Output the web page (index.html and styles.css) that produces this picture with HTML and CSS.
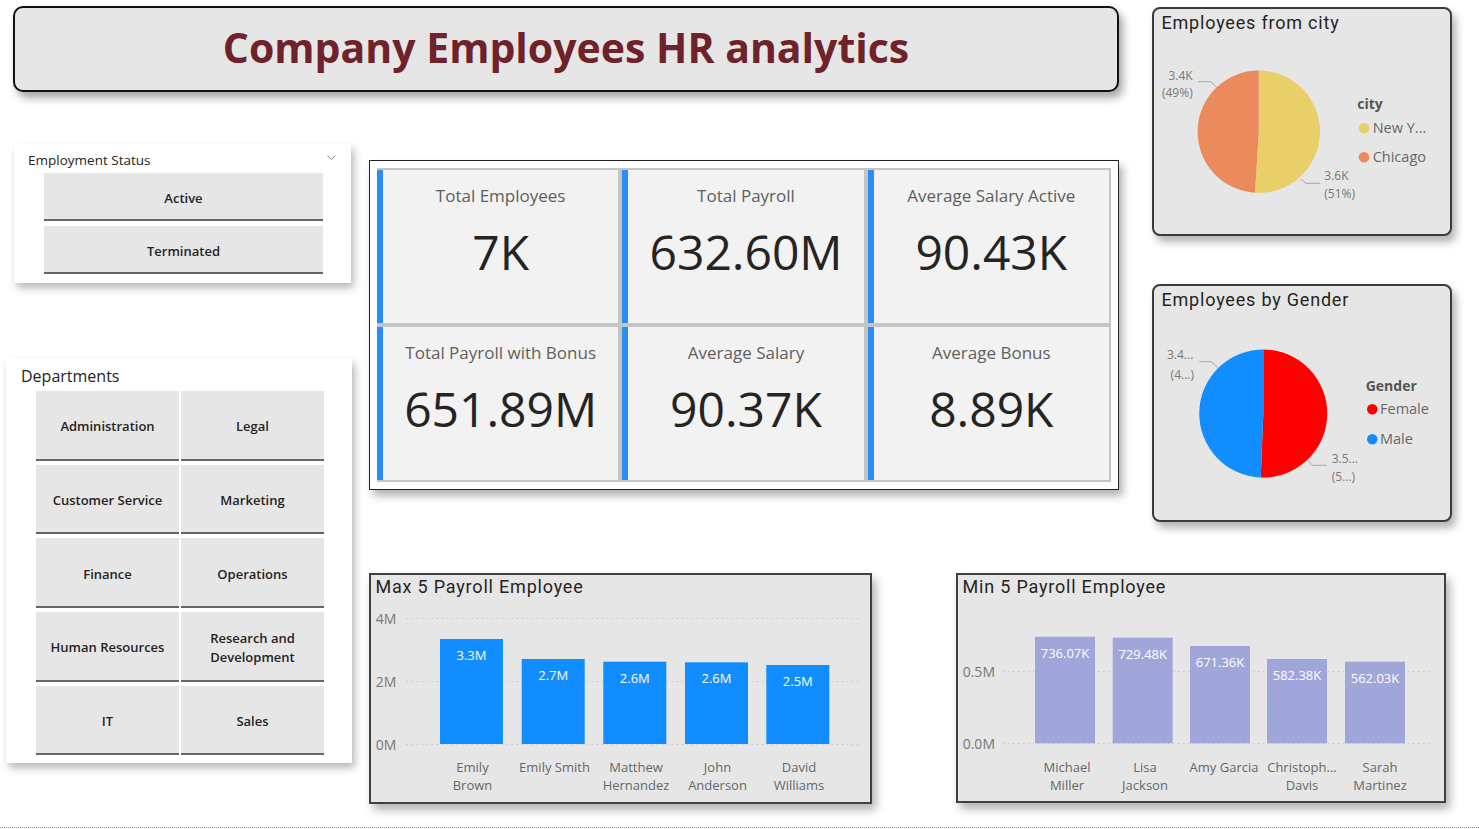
FILE: index.html
```html
<!DOCTYPE html>
<html lang="en">
<head>
<meta charset="utf-8">
<title>Company Employees HR analytics</title>
<link rel="stylesheet" href="styles.css">
</head>
<body>
<main class="page">
  <header class="title-box">
    <h1 class="title">Company Employees HR analytics</h1>
  </header>

  <section class="slicer status">
    <div class="slicer-head">
      <span class="slicer-title">Employment Status</span>
      <svg class="chevron" width="9" height="5" viewBox="0 0 9 5"><polyline points="0.5,0.5 4.5,4.5 8.5,0.5"/></svg>
    </div>
    <div class="status-list">
      <div class="chip">Active</div>
      <div class="chip">Terminated</div>
    </div>
  </section>

  <section class="slicer depts">
    <h2 class="depts-title">Departments</h2>
    <div class="dept-grid">
      <div class="chip">Administration</div>
      <div class="chip">Legal</div>
      <div class="chip">Customer Service</div>
      <div class="chip">Marketing</div>
      <div class="chip">Finance</div>
      <div class="chip">Operations</div>
      <div class="chip">Human Resources</div>
      <div class="chip">Research and<br>Development</div>
      <div class="chip">IT</div>
      <div class="chip">Sales</div>
    </div>
  </section>

  <section class="kpi-panel">
    <div class="kpi-grid">
      <div class="kpi"><div class="kpi-label">Total Employees</div><div class="kpi-value">7K</div></div>
      <div class="kpi"><div class="kpi-label">Total Payroll</div><div class="kpi-value">632.60M</div></div>
      <div class="kpi"><div class="kpi-label">Average Salary Active</div><div class="kpi-value">90.43K</div></div>
      <div class="kpi"><div class="kpi-label">Total Payroll with Bonus</div><div class="kpi-value">651.89M</div></div>
      <div class="kpi"><div class="kpi-label">Average Salary</div><div class="kpi-value">90.37K</div></div>
      <div class="kpi"><div class="kpi-label">Average Bonus</div><div class="kpi-value">8.89K</div></div>
    </div>
  </section>

  <aside class="right-col">
    <section class="pie-card city">
      <h2 class="chart-title">Employees from city</h2>
      <svg class="chart" width="296" height="195" viewBox="2 32 296 195">
        <path class="slice-yellow" d="M106.8 124.7 L106.8 63.5 A61.2 61.2 0 1 1 102.96 185.78 Z"/>
        <path class="slice-orange" d="M106.8 124.7 L102.96 185.78 A61.2 61.2 0 0 1 106.8 63.5 Z"/>
        <polyline class="leader" points="46.3,74.7 58.7,74.7 64.7,80.3"/>
        <polyline class="leader" points="149,172 153.7,176.3 168,176.3"/>
        <text class="pie-lab end" x="40.7" y="73">3.4K</text>
        <text class="pie-lab end" x="40.7" y="90">(49%)</text>
        <text class="pie-lab" x="172.3" y="173">3.6K</text>
        <text class="pie-lab" x="172.3" y="190.6">(51%)</text>
        <text class="leg-title" x="205.3" y="102.3">city</text>
        <circle class="slice-yellow" cx="212" cy="121.3" r="5.3"/>
        <text class="leg-item" x="220.7" y="126.4">New Y...</text>
        <circle class="slice-orange" cx="212" cy="150.3" r="5.3"/>
        <text class="leg-item" x="220.7" y="155.4">Chicago</text>
      </svg>
    </section>

    <section class="pie-card gender">
      <h2 class="chart-title">Employees by Gender</h2>
      <svg class="chart" width="296" height="204" viewBox="2 32 296 204">
        <path class="slice-red" d="M111.3 129.5 L111.3 65.5 A64 64 0 1 1 108.73 193.45 Z"/>
        <path class="slice-blue" d="M111.3 129.5 L108.73 193.45 A64 64 0 0 1 111.3 65.5 Z"/>
        <polyline class="leader" points="47.3,77.7 59,77.7 65.7,83.3"/>
        <polyline class="leader" points="156.3,177 160.7,181.3 174.7,181.3"/>
        <text class="pie-lab end" x="41.3" y="75.3">3.4...</text>
        <text class="pie-lab end" x="42" y="94.6">(4...)</text>
        <text class="pie-lab" x="179.7" y="179.3">3.5...</text>
        <text class="pie-lab" x="179.7" y="197">(5...)</text>
        <text class="leg-title" x="213.7" y="107">Gender</text>
        <circle class="slice-red" cx="220.3" cy="125.3" r="5.3"/>
        <text class="leg-item" x="228" y="130.4">Female</text>
        <circle class="slice-blue" cx="220.3" cy="155.3" r="5.3"/>
        <text class="leg-item" x="228" y="160.4">Male</text>
      </svg>
    </section>
  </aside>

  <section class="bar-card maxbar">
    <h2 class="chart-title">Max 5 Payroll Employee</h2>
    <svg class="chart" width="499" height="195" viewBox="2 34 499 195">
      <line class="gridline" x1="37.7" y1="45.5" x2="491.7" y2="45.5"/>
      <line class="gridline" x1="37.7" y1="108.5" x2="491.7" y2="108.5"/>
      <line class="gridline" x1="37.7" y1="171.5" x2="491.7" y2="171.5"/>
      <text class="axis" x="6.7" y="50.5">4M</text>
      <text class="axis" x="6.7" y="113.5">2M</text>
      <text class="axis" x="6.7" y="176.5">0M</text>
      <rect class="bar-blue" x="71" y="66" width="63" height="105"/>
      <rect class="bar-blue" x="152.7" y="86" width="63" height="85"/>
      <rect class="bar-blue" x="234.3" y="88.7" width="63" height="82.3"/>
      <rect class="bar-blue" x="316" y="89.3" width="63" height="81.7"/>
      <rect class="bar-blue" x="397.3" y="92" width="63" height="79"/>
      <text class="vlab" x="102.5" y="87">3.3M</text>
      <text class="vlab" x="184.2" y="107">2.7M</text>
      <text class="vlab" x="265.8" y="109.7">2.6M</text>
      <text class="vlab" x="347.5" y="110.3">2.6M</text>
      <text class="vlab" x="428.8" y="113">2.5M</text>
      <text class="xlab" x="103.5" y="198.5">Emily</text>
      <text class="xlab" x="103.5" y="216.5">Brown</text>
      <text class="xlab" x="185.5" y="198.5">Emily Smith</text>
      <text class="xlab" x="267" y="198.5">Matthew</text>
      <text class="xlab" x="267" y="216.5">Hernandez</text>
      <text class="xlab" x="348.5" y="198.5">John</text>
      <text class="xlab" x="348.5" y="216.5">Anderson</text>
      <text class="xlab" x="430" y="198.5">David</text>
      <text class="xlab" x="430" y="216.5">Williams</text>
    </svg>
  </section>

  <section class="bar-card minbar">
    <h2 class="chart-title">Min 5 Payroll Employee</h2>
    <svg class="chart" width="486" height="194" viewBox="2 34 486 194">
      <line class="gridline" x1="47.3" y1="98.5" x2="477" y2="98.5"/>
      <line class="gridline" x1="47.3" y1="170.5" x2="477" y2="170.5"/>
      <text class="axis" x="6.7" y="103.5">0.5M</text>
      <text class="axis" x="6.7" y="175.5">0.0M</text>
      <rect class="bar-purple" x="79" y="63.7" width="60" height="106.6"/>
      <rect class="bar-purple" x="156.7" y="64.7" width="60" height="105.6"/>
      <rect class="bar-purple" x="234" y="73" width="60" height="97.3"/>
      <rect class="bar-purple" x="311" y="86" width="60" height="84.3"/>
      <rect class="bar-purple" x="389" y="88.7" width="60" height="81.6"/>
      <text class="vlab" x="109" y="84.7">736.07K</text>
      <text class="vlab" x="186.7" y="85.7">729.48K</text>
      <text class="vlab" x="264" y="94">671.36K</text>
      <text class="vlab" x="341" y="107">582.38K</text>
      <text class="vlab" x="419" y="109.7">562.03K</text>
      <text class="xlab" x="111" y="198.5">Michael</text>
      <text class="xlab" x="111" y="216.5">Miller</text>
      <text class="xlab" x="189" y="198.5">Lisa</text>
      <text class="xlab" x="189" y="216.5">Jackson</text>
      <text class="xlab" x="268" y="198.5">Amy Garcia</text>
      <text class="xlab" x="346" y="198.5">Christoph...</text>
      <text class="xlab" x="346" y="216.5">Davis</text>
      <text class="xlab" x="424" y="198.5">Sarah</text>
      <text class="xlab" x="424" y="216.5">Martinez</text>
    </svg>
  </section>
</main>
</body>
</html>
```

FILE: styles.css
```css
* {
  box-sizing: border-box;
  margin: 0;
  padding: 0;
}

body {
  background: #ffffff;
  font-family: "Open Sans", "Noto Sans", sans-serif;
  color: #252423;
}

.page {
  display: grid;
  grid-template-columns: 360px 586px 196px 337px;
  grid-template-rows: 140px 212px 213px 262px;
  width: 1479px;
  height: 828px;
  border-bottom: 1px dotted #8c8c8c;
  overflow: hidden;
}

.page > * {
  justify-self: start;
  align-self: start;
}

/* Title banner */
.title-box {
  grid-column: 1 / 4;
  grid-row: 1;
  margin: 6px 0 0 13px;
  width: 1106px;
  height: 86px;
  background: #e6e6e6;
  border: 2px solid #111111;
  border-radius: 10px;
  box-shadow: 4px 6px 8px rgba(0, 0, 0, 0.35);
  padding-top: 11px;
  text-align: center;
}

.title {
  font-size: 41px;
  font-weight: 700;
  line-height: 56px;
  color: #70222a;
}

/* Slicers */
.slicer {
  background: #ffffff;
  box-shadow: 3px 5px 8px rgba(0, 0, 0, 0.28);
}

.status {
  grid-column: 1;
  grid-row: 2;
  margin: 4px 0 0 14px;
  width: 337px;
  height: 139px;
  padding: 7px 0 0 14px;
}

.slicer-head {
  display: flex;
  justify-content: space-between;
  align-items: flex-start;
  width: 308px;
  height: 22px;
}

.slicer-title {
  font-size: 13.5px;
  line-height: 18px;
}

.chevron {
  margin-top: 4px;
}

.chevron polyline {
  fill: none;
  stroke: #8a8a8a;
  stroke-width: 1;
}

.status-list {
  margin-left: 16px;
  width: 279px;
  display: flex;
  flex-direction: column;
  gap: 5px;
}

.chip {
  background: #e6e6e6;
  border-bottom: 2px solid #666666;
  display: flex;
  align-items: center;
  justify-content: center;
  text-align: center;
  padding-top: 4px;
  font-size: 13px;
  font-weight: 600;
  line-height: 19px;
  color: #252423;
}

.status .chip {
  height: 48px;
}

.depts {
  grid-column: 1;
  grid-row: 3 / 5;
  margin: 6px 0 0 6px;
  width: 346px;
  height: 405px;
  padding: 7px 0 0 15px;
}

.depts-title {
  font-size: 16px;
  font-weight: 400;
  line-height: 22px;
  height: 26px;
}

.dept-grid {
  margin-left: 15px;
  display: grid;
  grid-template-columns: 143px 143px;
  grid-auto-rows: 69.5px;
  column-gap: 2px;
  row-gap: 4.2px;
}

/* KPI cards */
.kpi-panel {
  grid-column: 2 / 4;
  grid-row: 2 / 4;
  margin: 20px 0 0 9px;
  width: 750px;
  height: 330px;
  background: #ffffff;
  border: 1px solid #222222;
  padding: 7px;
  box-shadow: 4px 6px 8px rgba(0, 0, 0, 0.3);
}

.kpi-grid {
  display: grid;
  grid-template-columns: repeat(3, 1fr);
  grid-template-rows: repeat(2, 1fr);
  gap: 4px;
  height: 100%;
  background: #c4c4c4;
  padding: 2px 2px 2px 0;
}

.kpi {
  background: #f2f2f2;
  border-left: 6px solid #2b8ef5;
  text-align: center;
}

.kpi-label {
  font-size: 17px;
  line-height: 23px;
  color: #605e5c;
  padding-top: 14px;
}

.kpi-value {
  font-size: 48px;
  line-height: 52px;
  margin-top: 19px;
  color: #252423;
}

/* Chart cards */
.chart-title {
  font-family: Roboto, "Noto Sans", sans-serif;
  font-weight: 400;
  font-size: 18px;
  line-height: 22px;
  letter-spacing: 0.8px;
  color: #252423;
}

.chart {
  display: block;
}

.right-col {
  grid-column: 4;
  grid-row: 1 / 4;
  margin-left: 10px;
  display: flex;
  flex-direction: column;
}

.pie-card {
  width: 300px;
  background: #e6e6e6;
  border: 2px solid #3a3a3a;
  border-radius: 8px;
  box-shadow: 4px 6px 9px rgba(0, 0, 0, 0.3);
}

.pie-card .chart-title {
  height: 30px;
  padding: 3px 0 0 7.5px;
}

.city {
  margin-top: 7px;
  height: 229px;
}

.gender {
  margin-top: 48px;
  height: 238px;
}

.bar-card {
  background: #e6e6e6;
  border: 2px solid #404040;
  box-shadow: 4px 6px 9px rgba(0, 0, 0, 0.3);
}

.bar-card .chart-title {
  height: 32px;
  padding: 0.5px 0 0 4.5px;
}

.maxbar {
  grid-column: 2;
  grid-row: 4;
  margin: 8px 0 0 9px;
  width: 503px;
  height: 231px;
}

.minbar {
  grid-column: 3 / 5;
  grid-row: 4;
  margin: 8px 0 0 10px;
  width: 490px;
  height: 230px;
}

/* SVG chart parts */
.slice-yellow { fill: #e8cf68; }
.slice-orange { fill: #ea8a5d; }
.slice-red { fill: #fd0000; }
.slice-blue { fill: #118dff; }

.leader {
  fill: none;
  stroke: #a6a6a6;
  stroke-width: 1;
}

.pie-lab {
  font-family: "Open Sans", sans-serif;
  font-size: 12px;
  fill: #777777;
}

.pie-lab.end {
  text-anchor: end;
}

.leg-title {
  font-family: "Open Sans", sans-serif;
  font-size: 14px;
  font-weight: 700;
  fill: #555555;
}

.leg-item {
  font-family: "Open Sans", sans-serif;
  font-size: 14.5px;
  fill: #666666;
}

.gridline {
  stroke: #bdbdbd;
  stroke-width: 1;
  stroke-dasharray: 1 4;
}

.axis {
  font-family: "Open Sans", sans-serif;
  font-size: 14px;
  fill: #777777;
}

.bar-blue { fill: #118dff; }
.bar-purple { fill: #a0a6d9; }

.vlab {
  font-family: "Open Sans", sans-serif;
  font-size: 13px;
  fill: #ffffff;
  text-anchor: middle;
}

.xlab {
  font-family: "Open Sans", sans-serif;
  font-size: 13px;
  fill: #666666;
  text-anchor: middle;
}
```
